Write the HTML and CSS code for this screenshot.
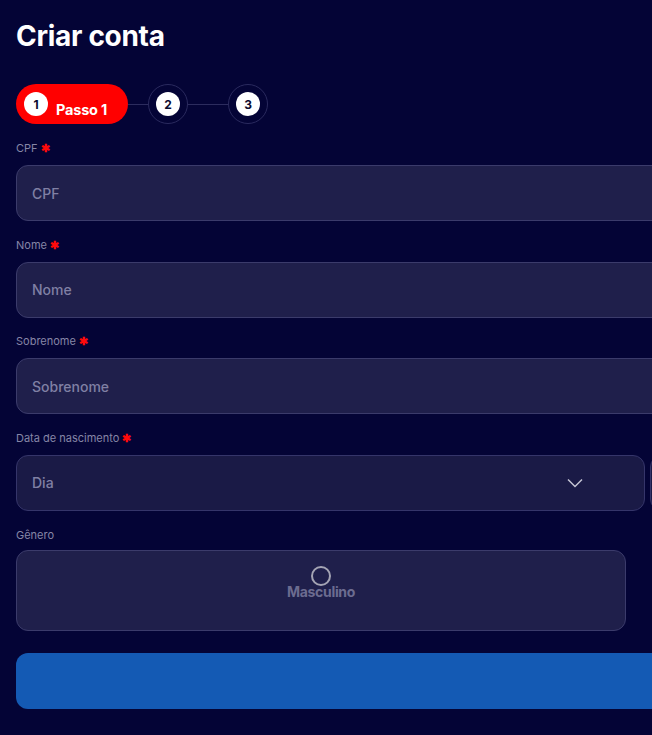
FILE: index.html
```html
<!DOCTYPE html>
<html lang="pt-BR">
<head>
<meta charset="utf-8">
<title>Criar conta</title>
<link rel="stylesheet" href="styles.css">
</head>
<body>
<main class="page">
  <h1 class="title">Criar conta</h1>

  <div class="stepper">
    <div class="step step-active">
      <span class="step-num">1</span>
      <span class="step-label">Passo 1</span>
    </div>
    <span class="step-line"></span>
    <div class="step step-ring"><span class="step-num">2</span></div>
    <span class="step-line step-line-long"></span>
    <div class="step step-ring"><span class="step-num">3</span></div>
  </div>

  <form class="form">
    <div class="field">
      <label class="label">CPF <span class="req">✱</span></label>
      <div class="input"><span class="ph">CPF</span></div>
    </div>
    <div class="field">
      <label class="label">Nome <span class="req">✱</span></label>
      <div class="input"><span class="ph">Nome</span></div>
    </div>
    <div class="field">
      <label class="label">Sobrenome <span class="req">✱</span></label>
      <div class="input"><span class="ph">Sobrenome</span></div>
    </div>
    <div class="field">
      <label class="label">Data de nascimento <span class="req">✱</span></label>
      <div class="date-row">
        <div class="select">
          <span class="ph">Dia</span>
          <svg class="chev" width="16" height="10" viewBox="0 0 16 10"><path d="M1 1.5 L8 8.5 L15 1.5" fill="none" stroke="#c4c4d4" stroke-width="1.5"/></svg>
        </div>
        <div class="select"></div>
      </div>
    </div>
    <div class="field">
      <label class="label label-plain">Gênero</label>
      <div class="gender">
        <div class="radio-opt">
          <span class="radio"></span>
          <span class="radio-text">Masculino</span>
        </div>
      </div>
    </div>
    <div class="submit"></div>
  </form>
</main>
</body>
</html>
```
FILE: styles.css
```css
html, body {
  margin: 0;
  padding: 0;
  background: #040436;
  overflow: hidden;
}
body {
  font-family: Inter, "Liberation Sans", sans-serif;
  color: #fff;
}
.page {
  padding: 19px 0 0 16px;
  width: 760px;
}
.title {
  margin: 0;
  font-size: 28px;
  font-weight: 700;
  line-height: 34px;
  letter-spacing: -0.3px;
  color: #fff;
}
.stepper {
  display: flex;
  align-items: center;
  margin-top: 31px;
  height: 40px;
}
.step {
  display: flex;
  align-items: center;
  height: 40px;
  box-sizing: border-box;
}
.step-active {
  background: #ff0000;
  border-radius: 20px;
  padding: 0 21px 0 8px;
  gap: 8px;
}
.step-ring {
  width: 40px;
  justify-content: center;
  border: 1px solid #2a2a5e;
  border-radius: 50%;
}
.step-num {
  width: 24px;
  height: 24px;
  border-radius: 50%;
  background: #fff;
  color: #0a0a2e;
  font-size: 12px;
  font-weight: 700;
  display: flex;
  align-items: center;
  justify-content: center;
}
.step-label {
  font-size: 14.5px;
  font-weight: 700;
  letter-spacing: -0.2px;
  padding-top: 11px;
}
.step-line {
  width: 20px;
  height: 1px;
  background: #2c2c5e;
}
.step-line-long {
  width: 40px;
}
.form {
  display: flex;
  flex-direction: column;
  margin-top: 17px;
}
.field {
  display: flex;
  flex-direction: column;
  margin-bottom: 16.67px;
}
.label {
  font-size: 11px;
  line-height: 14px;
  color: #8686a6;
  margin-bottom: 10px;
}
.label-plain {
  margin-bottom: 8px;
}
.req {
  color: #ff0a0a;
  font-size: 11px;
  font-weight: 700;
}
.input {
  height: 56px;
  box-sizing: border-box;
  background: #1f1f4b;
  border: 1px solid #3b3b6b;
  border-radius: 12px;
  display: flex;
  align-items: center;
  padding-left: 15px;
  width: 740px;
}
.ph {
  font-size: 14px;
  font-weight: 500;
  color: #8080a4;
}
.date-row {
  display: flex;
  gap: 5px;
}
.select {
  height: 56px;
  width: 629px;
  flex: none;
  box-sizing: border-box;
  background: #1a1a46;
  border: 1px solid #35356a;
  border-radius: 12px;
  display: flex;
  align-items: center;
  padding-left: 15px;
  padding-right: 61px;
  justify-content: space-between;
}
.chev {
  display: block;
}
.gender {
  width: 610px;
  height: 81px;
  box-sizing: border-box;
  background: #1f1f4b;
  border: 1px solid #3b3b6b;
  border-radius: 12px;
  display: flex;
  justify-content: center;
  padding-top: 15px;
}
.radio-opt {
  display: flex;
  flex-direction: column;
  align-items: center;
}
.radio {
  width: 20px;
  height: 20px;
  box-sizing: border-box;
  border: 2px solid #a4a4b4;
  border-radius: 50%;
}
.radio-text {
  font-size: 14px;
  font-weight: 700;
  color: #6c6c90;
  letter-spacing: -0.3px;
  line-height: 13px;
  margin-top: -1px;
}
.submit {
  margin-top: 6px;
  height: 56px;
  width: 740px;
  background: #145ab4;
  border-radius: 12px;
}
```
